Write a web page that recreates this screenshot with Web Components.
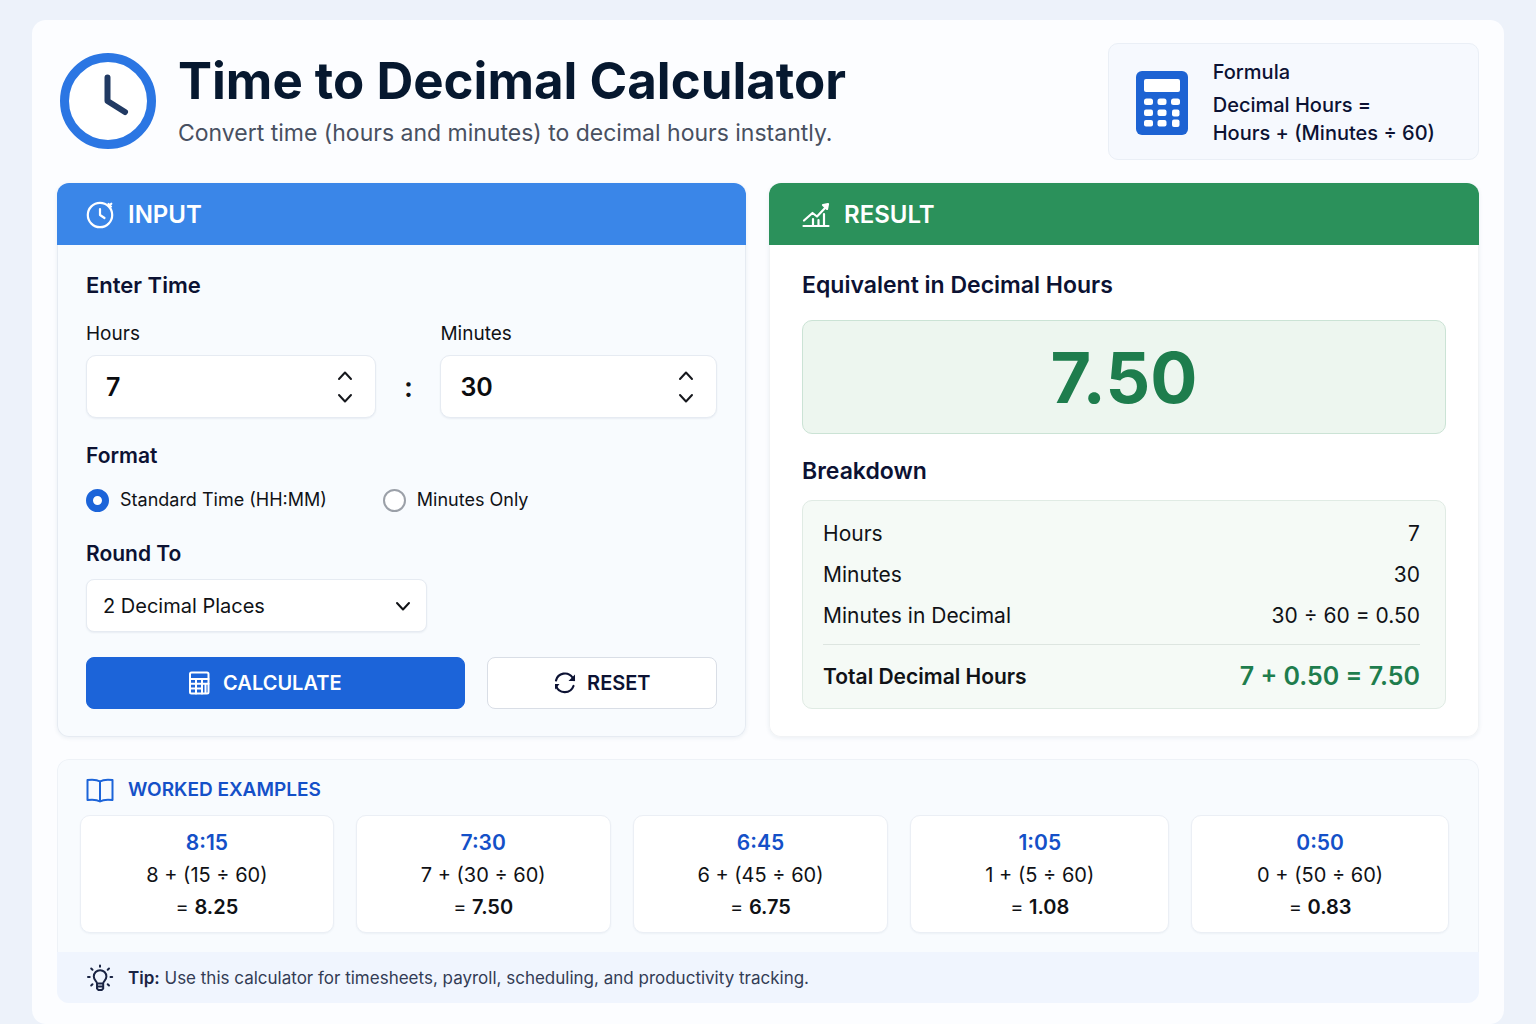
<!DOCTYPE html>
<html lang="en">
<head>
<meta charset="utf-8">
<meta name="viewport" content="width=device-width, initial-scale=1">
<title>Time to Decimal Calculator</title>
<style>
    :root {
        --blue: #1c64d9;
        --blue-text: #1450c8;
        --blue-header: #3a86e8;
        --green: #1e7d4d;
        --green-header: #2b915b;
        --ink: #0c1233;
        --text: #101216;
        --line: #e6ebf2;
        --radius: 10px;
    }

    body {
        margin: 0;
        font-family: Inter, "Liberation Sans", sans-serif;
        font-size: 20px;
        line-height: 28px;
        color: var(--text);
        background: #edf2fa;
    }
</style>
</head>
<body>
<calc-app></calc-app>

<template id="calc-app-template">
    <style>
        :host {
            display: block;
            padding: 20px 32px 0;
        }

        main {
            padding: 23px 25px 21px;
            background: #fcfdff;
            border-radius: 14px;
        }

        .panels {
            display: grid;
            grid-template-columns: minmax(0, 33fr) minmax(0, 34fr);
            gap: 23px;
            margin: 23px 0 22px;
        }

        .examples {
            display: grid;
            grid-template-columns: 253fr 254fr 255fr 258fr 257fr;
            gap: 22px;
        }
    </style>
    <main>
        <calc-header>
            <span slot="title">Time to Decimal Calculator</span>
            <span slot="subtitle">Convert time (hours and minutes) to decimal hours instantly.</span>
            <formula-card slot="aside"></formula-card>
        </calc-header>
        <div class="panels">
            <calc-panel icon="timer" tone="blue">
                <span slot="heading">INPUT</span>
                <time-form></time-form>
            </calc-panel>
            <calc-panel icon="chart" tone="green">
                <span slot="heading">RESULT</span>
                <time-result></time-result>
            </calc-panel>
        </div>
        <worked-examples>
            <span slot="heading">WORKED EXAMPLES</span>
            <div class="examples">
                <example-card hours="8" minutes="15"></example-card>
                <example-card hours="7" minutes="30"></example-card>
                <example-card hours="6" minutes="45"></example-card>
                <example-card hours="1" minutes="5"></example-card>
                <example-card hours="0" minutes="50"></example-card>
            </div>
            <tip-bar slot="footer">Use this calculator for timesheets, payroll, scheduling, and productivity tracking.</tip-bar>
        </worked-examples>
    </main>
</template>

<template id="calc-header-template">
    <style>
        :host {
            display: flex;
            align-items: flex-start;
            justify-content: space-between;
            gap: 24px;
        }

        header {
            display: flex;
            align-items: center;
            gap: 22px;
            padding: 9px 0 0 3px;
        }

        calc-icon {
            width: 96px;
            height: 96px;
        }

        h1 {
            margin: 0;
            font-size: 51px;
            font-weight: 700;
            line-height: 58px;
            color: #06182f;
        }

        p {
            margin: 7px 0 0;
            font-size: 23px;
            line-height: 32px;
            color: #485061;
        }
    </style>
    <header>
        <calc-icon name="clock"></calc-icon>
        <div>
            <h1><slot name="title"></slot></h1>
            <p><slot name="subtitle"></slot></p>
        </div>
    </header>
    <slot name="aside"></slot>
</template>

<template id="formula-card-template">
    <style>
        :host {
            display: flex;
            align-items: center;
            gap: 25px;
            box-sizing: border-box;
            padding: 14px 43px 12px 27px;
            background: #f6f9fe;
            border: 1px solid #eaeff6;
            border-radius: var(--radius);
            font-weight: 500;
            color: var(--ink);
        }

        calc-icon {
            width: 52px;
            height: 64px;
        }

        h2 {
            margin: 0 0 5px;
            font-size: 20px;
            font-weight: 500;
        }

        p {
            margin: 0;
        }
    </style>
    <calc-icon name="calculator-solid"></calc-icon>
    <div>
        <h2>Formula</h2>
        <p>Decimal Hours =<br>Hours + (Minutes ÷ 60)</p>
    </div>
</template>

<template id="calc-panel-template">
    <style>
        :host {
            display: flex;
            flex-direction: column;
            border-radius: 12px;
            box-shadow: 0 1px 4px #1c3c6414;
        }

        header {
            display: flex;
            align-items: center;
            gap: 14px;
            height: 60px;
            padding: 2px 29px 0;
            border-radius: 12px 12px 0 0;
            color: #fff;
            background: var(--blue-header);
        }

        h2 {
            margin: 0;
            font-size: 24px;
            font-weight: 600;
        }

        calc-icon {
            width: 28px;
            height: 28px;
        }

        .body {
            flex: 1;
            padding: 26px 28px 27px;
            border: 1px solid var(--line);
            border-top: 0;
            border-radius: 0 0 12px 12px;
            background: #f8fbfe;
        }

        :host([tone="green"]) header {
            padding: 2px 33px 0;
            background: var(--green-header);
        }

        :host([tone="green"]) .body {
            padding: 26px 32px 27px;
            border-color: #f1f3f5;
            background: #fff;
        }
    </style>
    <header>
        <calc-icon></calc-icon>
        <h2><slot name="heading"></slot></h2>
    </header>
    <div class="body"><slot></slot></div>
</template>

<template id="number-field-template">
    <style>
        :host {
            display: block;
        }

        label {
            display: block;
            margin-bottom: 9px;
            font-size: 19px;
            line-height: 24px;
        }

        .box {
            display: flex;
            align-items: center;
            height: 61px;
            border: 1px solid var(--line);
            border-radius: var(--radius);
            background: #fff;
            box-shadow: 0 1px 2px #1c3c6412;
        }

        input {
            flex: 1;
            min-width: 0;
            padding: 0 0 0 19px;
            border: 0;
            outline: 0;
            background: none;
            font: 600 25px/32px Inter, "Liberation Sans", sans-serif;
            color: #0b0c0f;
            appearance: textfield;
        }

        input::-webkit-inner-spin-button {
            appearance: none;
            margin: 0;
        }

        .box:focus-within {
            border-color: var(--blue);
        }

        .spin {
            display: flex;
            flex-direction: column;
            margin-right: 16px;
        }

        button {
            display: flex;
            align-items: center;
            justify-content: center;
            width: 28px;
            height: 22px;
            padding: 0;
            border: 0;
            background: none;
            color: #16181d;
            cursor: pointer;
        }

        calc-icon {
            width: 18px;
            height: 18px;
        }
    </style>
    <label for="value"></label>
    <div class="box">
        <input id="value" type="number" min="0">
        <div class="spin">
            <button type="button" data-step="1" aria-label="Increase"><calc-icon name="up"></calc-icon></button>
            <button type="button" data-step="-1" aria-label="Decrease"><calc-icon name="down"></calc-icon></button>
        </div>
    </div>
</template>

<template id="calc-button-template">
    <style>
        :host {
            display: block;
        }

        button {
            display: flex;
            align-items: center;
            justify-content: center;
            gap: 10px;
            width: 100%;
            height: 52px;
            border: 1px solid #d9dee6;
            border-radius: 8px;
            background: #fff;
            font: 600 20px/28px Inter, "Liberation Sans", sans-serif;
            color: var(--ink);
            cursor: pointer;
        }

        :host([primary]) button {
            gap: 12px;
            padding-right: 28px;
            border-color: var(--blue);
            background: var(--blue);
            color: #fff;
        }

        calc-icon {
            width: 24px;
            height: 24px;
        }
    </style>
    <button type="button"><calc-icon></calc-icon><slot></slot></button>
</template>

<template id="time-form-template">
    <style>
        :host {
            display: block;
        }

        h3 {
            margin: 0;
            font-size: 22px;
            font-weight: 600;
            color: var(--ink);
        }

        .time {
            display: grid;
            grid-template-columns: minmax(0, 21fr) 64px minmax(0, 20fr);
            margin: 23px 0 24px;
        }

        .colon {
            align-self: end;
            padding-bottom: 17px;
            text-align: center;
            font-size: 28px;
            font-weight: 600;
        }

        fieldset {
            margin: 0;
            padding: 0;
            border: 0;
        }

        legend,
        .round-label {
            display: block;
            padding: 0;
            font-size: 21px;
            font-weight: 600;
            color: var(--ink);
        }

        .choices {
            display: flex;
            gap: 56px;
            margin: 18px 0 28px;
        }

        .choices label {
            display: flex;
            align-items: center;
            gap: 11px;
            font-size: 18px;
            line-height: 24px;
        }

        input[type="radio"] {
            appearance: none;
            width: 23px;
            height: 23px;
            margin: 0;
            border: 2px solid #9ba0a8;
            border-radius: 50%;
            background: #fff;
        }

        input[type="radio"]:checked {
            border: 7px solid var(--blue);
        }

        .select {
            display: grid;
            align-items: center;
            width: 54%;
            margin: 11px 0 25px;
        }

        .select > * {
            grid-area: 1 / 1;
        }

        select {
            appearance: none;
            height: 53px;
            padding: 0 44px 0 16px;
            border: 1px solid var(--line);
            border-radius: 8px;
            background: #fff;
            font: 400 20px/24px Inter, "Liberation Sans", sans-serif;
            color: var(--text);
            box-shadow: 0 1px 2px #1c3c6412;
        }

        .select calc-icon {
            justify-self: end;
            width: 18px;
            height: 18px;
            margin-right: 15px;
            pointer-events: none;
        }

        .actions {
            display: grid;
            grid-template-columns: minmax(0, 378fr) minmax(0, 230fr);
            gap: 22px;
        }
    </style>
    <h3>Enter Time</h3>
    <div class="time">
        <number-field id="hours" label="Hours" value="7"></number-field>
        <span class="colon">:</span>
        <number-field id="minutes" label="Minutes" value="30"></number-field>
    </div>
    <fieldset>
        <legend>Format</legend>
        <div class="choices">
            <label><input type="radio" name="format" value="standard" checked>Standard Time (HH:MM)</label>
            <label><input type="radio" name="format" value="minutes">Minutes Only</label>
        </div>
    </fieldset>
    <label class="round-label" for="round">Round To</label>
    <div class="select">
        <select id="round">
            <option value="1">1 Decimal Place</option>
            <option value="2" selected>2 Decimal Places</option>
            <option value="3">3 Decimal Places</option>
            <option value="4">4 Decimal Places</option>
        </select>
        <calc-icon name="down"></calc-icon>
    </div>
    <div class="actions">
        <calc-button id="calculate" icon="calculator" primary>CALCULATE</calc-button>
        <calc-button id="reset" icon="refresh">RESET</calc-button>
    </div>
</template>

<template id="time-result-template">
    <style>
        :host {
            display: block;
        }

        h3 {
            margin: 0;
            font-size: 23px;
            font-weight: 600;
            color: var(--ink);
        }

        output {
            display: block;
            margin: 21px 0 23px;
            padding: 17px 0 15px;
            border: 1px solid #cbe3d5;
            border-radius: var(--radius);
            background: #edf6ef;
            text-align: center;
            font-size: 70px;
            font-weight: 700;
            line-height: 80px;
            color: var(--green);
        }

        dl {
            margin: 15px 0 0;
            padding: 12px 25px 0 20px;
            border: 1px solid #e0ebe4;
            border-radius: var(--radius);
            background: #f5faf6;
        }

        div {
            display: flex;
            justify-content: space-between;
            line-height: 41px;
            font-size: 21px;
        }

        dd {
            margin: 0;
        }

        .total {
            margin-top: 8px;
            border-top: 1px solid #dde5e0;
            font-weight: 600;
            line-height: 63px;
        }

        .total dd {
            font-size: 25px;
            color: var(--green);
        }
    </style>
    <h3>Equivalent in Decimal Hours</h3>
    <output id="decimal"></output>
    <h3>Breakdown</h3>
    <dl>
        <div><dt>Hours</dt><dd id="hours"></dd></div>
        <div><dt>Minutes</dt><dd id="minutes"></dd></div>
        <div><dt>Minutes in Decimal</dt><dd id="fraction"></dd></div>
        <div class="total"><dt>Total Decimal Hours</dt><dd id="total"></dd></div>
    </dl>
</template>

<template id="worked-examples-template">
    <style>
        :host {
            display: block;
            border-radius: 12px;
            background: #f8fbfe;
            overflow: hidden;
        }

        section {
            padding: 16px 29px 19px 22px;
            border: 1px solid #eef2f7;
            border-bottom: 0;
            border-radius: 12px 12px 0 0;
        }

        header {
            display: flex;
            align-items: center;
            gap: 14px;
            margin-bottom: 11px;
            padding-left: 6px;
            color: var(--blue-text);
        }

        h2 {
            margin: 0;
            font-size: 19px;
            font-weight: 600;
        }

        calc-icon {
            width: 28px;
            height: 28px;
        }
    </style>
    <section>
        <header>
            <calc-icon name="book"></calc-icon>
            <h2><slot name="heading"></slot></h2>
        </header>
        <slot></slot>
    </section>
    <slot name="footer"></slot>
</template>

<template id="example-card-template">
    <style>
        :host {
            display: block;
            padding: 11px 0 9px;
            border: 1px solid #ebeff5;
            border-radius: var(--radius);
            background: #fff;
            text-align: center;
            line-height: 32px;
            box-shadow: 0 1px 2px #1c3c640d;
        }

        h3 {
            margin: 0;
            font-size: 21px;
            font-weight: 600;
            color: var(--blue-text);
        }

        p {
            margin: 0;
        }

        b {
            font-weight: 600;
        }
    </style>
    <h3></h3>
    <p id="sum"></p>
    <p>= <b></b></p>
</template>

<template id="tip-bar-template">
    <style>
        :host {
            display: flex;
            align-items: center;
            gap: 14px;
            height: 51px;
            padding: 0 29px;
            background: #f0f5fe;
            font-size: 17px;
            line-height: 24px;
            color: #333c55;
        }

        calc-icon {
            width: 28px;
            height: 28px;
            color: #1a2444;
        }

        p {
            margin: 0;
        }

        b {
            font-weight: 600;
            color: #1a2444;
        }
    </style>
    <calc-icon name="bulb"></calc-icon>
    <p><b>Tip:</b> <slot></slot></p>
</template>

<script type="module">
    const ICONS = {
        clock: `<svg viewBox="0 0 96 96"><circle cx="48" cy="48" r="43.5" fill="#fff" stroke="#2b76e3" stroke-width="9"/><path d="M47.500 24.500V48L65 59" stroke="#213a63" stroke-width="6"/></svg>`,
        "calculator-solid": `<svg viewBox="0 0 52 64"><rect width="52" height="64" rx="6" fill="#1d63d3"/><g fill="#fff"><rect x="8" y="8" width="36" height="13" rx="2"/><rect x="8" y="27.500" width="9" height="6.500" rx="2.500"/><rect x="21.500" y="27.500" width="9" height="6.500" rx="2.500"/><rect x="35" y="27.500" width="9" height="6.500" rx="2.500"/><rect x="8" y="38.500" width="9" height="6.500" rx="2"/><rect x="21.500" y="38.500" width="9" height="6.500" rx="2"/><rect x="36" y="38.500" width="7.500" height="7" rx="2"/><rect x="8" y="49" width="9" height="6.500" rx="2"/><rect x="21.500" y="49" width="9" height="6.500" rx="2"/><rect x="36" y="48.500" width="7.500" height="7.500" rx="2"/></g></svg>`,
        timer: `<svg viewBox="0 0 28 28" stroke-width="2.200"><circle cx="14" cy="14" r="12.200"/><path d="M14 8v6l4.500 3M22.500 3l2.500 2.500M25.300 2.700l-2 2"/></svg>`,
        chart: `<svg viewBox="0 0 28 28" stroke-width="2.200"><path d="M1.500 25h25M2 19.500l8.500-7.500 4.500 3.500L24 6M11 18v7M16.500 19v6M22 13v12"/><path d="M21 4l5-1-1 5z" fill="currentColor"/></svg>`,
        up: `<svg viewBox="0 0 18 18" stroke-width="2"><path d="M3 12l6-6.500 6 6.500"/></svg>`,
        down: `<svg viewBox="0 0 18 18" stroke-width="2"><path d="M3 6l6 6.500L15 6"/></svg>`,
        calculator: `<svg viewBox="0 0 24 24" stroke-width="2"><rect x="3" y="1.500" width="18.500" height="21" rx="1.500"/><path d="M3 8h18.500M3 12.800h18.500M3 17.600h12M9 8v14.500M15 8v14.500M18.500 13v9"/></svg>`,
        refresh: `<svg viewBox="0 0 24 24" stroke-width="2.200"><path d="M3 9.500A9.200 9.200 0 0 1 19.500 6.500L21 9M20.500 15A9.200 9.200 0 0 1 3 14.500"/><path d="M22 3.500V10H15.500z" fill="currentColor" stroke="none"/><path d="M2 18.500v-5.500h4.500z" fill="currentColor" stroke="none"/></svg>`,
        book: `<svg viewBox="0 0 28 28" stroke-width="2"><path d="M14 5.500C11 3.500 6 3.500 1.500 4v20c4.500-.500 9.500-.500 12.500 1.500 3-2 8-2 12.500-1.500V4C22 3.500 17 3.500 14 5.500zM14 5.500v20" stroke="#1c64d9"/></svg>`,
        bulb: `<svg viewBox="0 0 28 28" stroke-width="2"><path d="M11 19.500c0-2.500-3.200-3-3.200-7a6.300 6.300 0 0 1 12.600 0c0 4-3.200 4.500-3.200 7zM11 20v4.500l1.500 1.500h3.200l1.500-1.500V20M11 22.500h6.200M14 1.500v1.200M5.200 4.500l1.300 1.300M23 4.500l-1.300 1.300M2 13h1.700M24.500 13h1.700M5.200 21.500l1.300-1.300M23 21.500l-1.300-1.300"/></svg>`,
    };

    class BaseElement extends HTMLElement {
        constructor() {
            super();
            const template = document.getElementById(`${this.localName}-template`);
            this.attachShadow({ mode: "open" }).append(template.content.cloneNode(true));
        }

        $(selector) {
            return this.shadowRoot.querySelector(selector);
        }
    }

    customElements.define(
        "calc-icon",
        class extends HTMLElement {
            static observedAttributes = ["name"];

            constructor() {
                super();
                this.attachShadow({ mode: "open" });
            }

            attributeChangedCallback() {
                this.shadowRoot.innerHTML = `
                    <style>
                        :host { display: block; flex: none; }
                        svg {
                            display: block;
                            width: 100%;
                            height: 100%;
                            fill: none;
                            stroke: currentColor;
                            stroke-linecap: round;
                            stroke-linejoin: round;
                        }
                        svg rect[fill], svg g[fill] { stroke: none; }
                    </style>
                    ${ICONS[this.getAttribute("name")] ?? ""}`;
            }
        },
    );

    for (const name of ["calc-header", "formula-card", "worked-examples", "tip-bar"]) {
        customElements.define(name, class extends BaseElement {});
    }

    customElements.define(
        "calc-panel",
        class extends BaseElement {
            connectedCallback() {
                this.$("calc-icon").setAttribute("name", this.getAttribute("icon"));
            }
        },
    );

    customElements.define(
        "calc-button",
        class extends BaseElement {
            connectedCallback() {
                this.$("calc-icon").setAttribute("name", this.getAttribute("icon"));
            }
        },
    );

    customElements.define(
        "number-field",
        class extends BaseElement {
            connectedCallback() {
                this.$("label").textContent = this.getAttribute("label");
                this.reset();
                this.$(".spin").addEventListener("click", (e) => {
                    const button = e.target.closest("button");
                    if (button) this.value = Math.max(0, this.value + Number(button.dataset.step));
                });
            }

            get value() {
                return Number(this.$("input").value);
            }

            set value(value) {
                this.$("input").value = value;
            }

            reset() {
                this.value = this.getAttribute("value");
            }
        },
    );

    customElements.define(
        "example-card",
        class extends BaseElement {
            connectedCallback() {
                const hours = Number(this.getAttribute("hours"));
                const minutes = Number(this.getAttribute("minutes"));
                this.$("h3").textContent = `${hours}:${String(minutes).padStart(2, "0")}`;
                this.$("#sum").textContent = `${hours} + (${minutes} ÷ 60)`;
                this.$("b").textContent = (hours + minutes / 60).toFixed(2);
            }
        },
    );

    customElements.define(
        "time-form",
        class extends BaseElement {
            connectedCallback() {
                this.$("#calculate").addEventListener("click", () => this.submit());
                this.$("#reset").addEventListener("click", () => {
                    this.$("#hours").reset();
                    this.$("#minutes").reset();
                    this.$("[value=standard]").checked = true;
                    this.$("#round").value = "2";
                    this.submit();
                });
            }

            submit() {
                const minutesOnly = this.$("[value=minutes]").checked;
                this.dispatchEvent(new CustomEvent("calculate", {
                    bubbles: true,
                    detail: {
                        hours: minutesOnly ? 0 : this.$("#hours").value,
                        minutes: this.$("#minutes").value,
                        places: Number(this.$("#round").value),
                    },
                }));
            }
        },
    );

    customElements.define(
        "time-result",
        class extends BaseElement {
            connectedCallback() {
                this.show({ hours: 7, minutes: 30, places: 2 });
            }

            show({ hours, minutes, places }) {
                const fraction = (minutes / 60).toFixed(places);
                const total = (hours + minutes / 60).toFixed(places);
                this.$("#decimal").textContent = total;
                this.$("#hours").textContent = hours;
                this.$("#minutes").textContent = minutes;
                this.$("#fraction").textContent = `${minutes} ÷ 60 = ${fraction}`;
                this.$("#total").textContent = `${hours} + ${fraction} = ${total}`;
            }
        },
    );

    customElements.define(
        "calc-app",
        class extends BaseElement {
            connectedCallback() {
                this.shadowRoot.addEventListener("calculate", (e) => this.$("time-result").show(e.detail));
            }
        },
    );
</script>
</body>
</html>
